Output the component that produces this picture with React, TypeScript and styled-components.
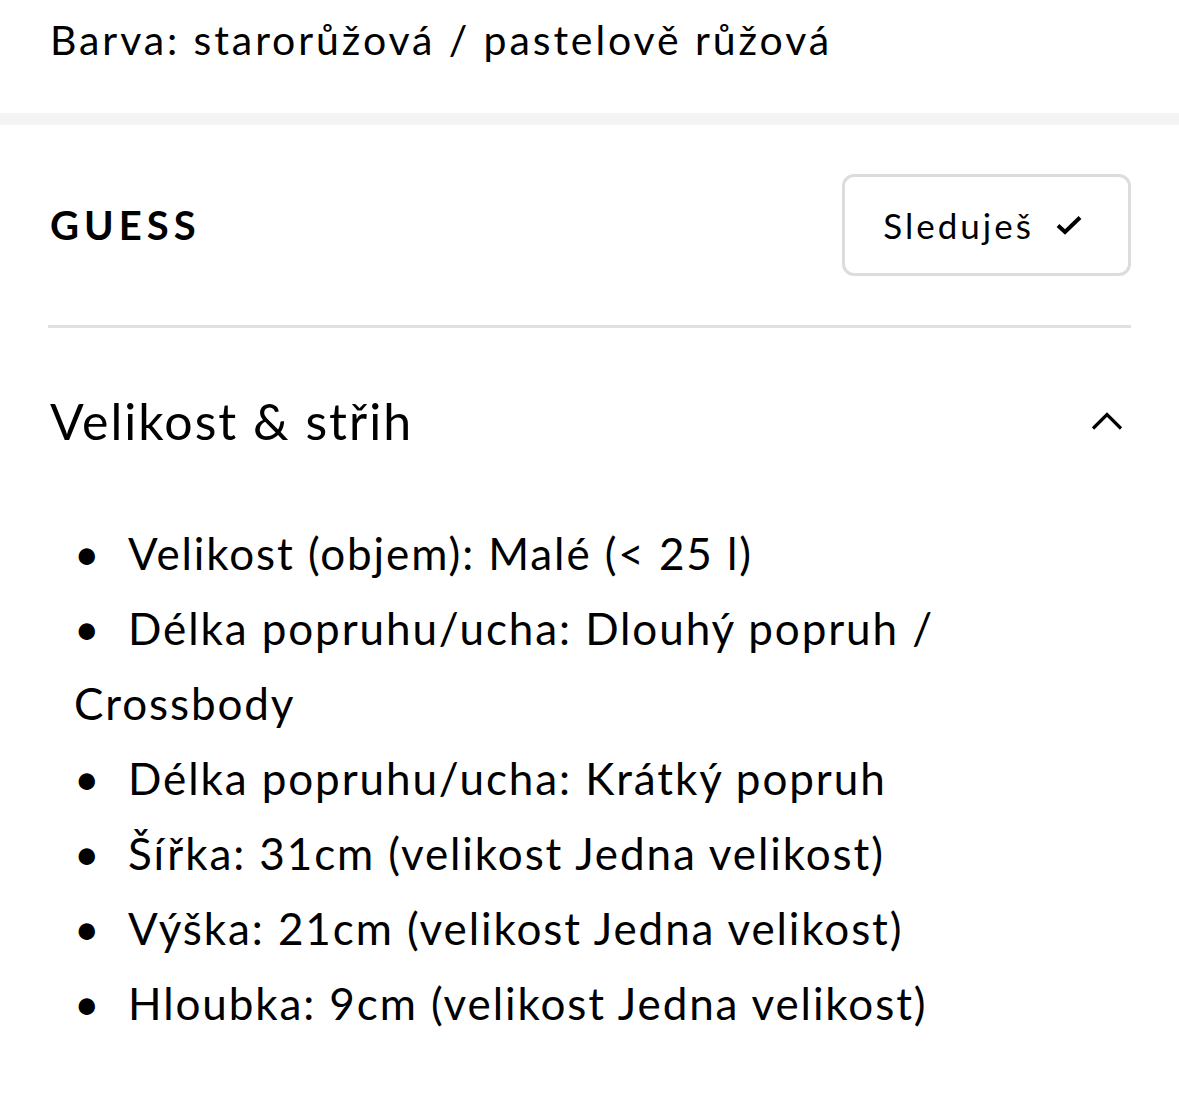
import React from "react";
import styled, { createGlobalStyle } from "styled-components";

const GlobalStyle = createGlobalStyle`
  html, body { margin: 0; padding: 0; background: #ffffff; }
  body { font-family: Lato, "Open Sans", sans-serif; color: #000; -webkit-font-smoothing: antialiased; }
`;

const Page = styled.div`
  width: 1179px;
  min-height: 1118px;
  background: #fff;
`;

const ColorSection = styled.div`
  height: 113px;
  padding: 0 50px;
  box-sizing: border-box;
  display: flex;
  align-items: flex-start;
`;

const ColorText = styled.p`
  margin: 0;
  padding-top: 12px;
  font-size: 41px;
  line-height: 56px;
  letter-spacing: 2.9px;
`;

const Band = styled.div`
  height: 12px;
  background: #f4f4f4;
`;

const Content = styled.div`
  padding: 0 48px;
`;

const BrandRow = styled.div`
  display: flex;
  align-items: center;
  justify-content: space-between;
  padding: 49px 0 49px 2px;
  border-bottom: 3px solid #e0e0e0;
`;

const Brand = styled.h2`
  margin: 0;
  font-size: 40px;
  font-weight: 700;
  letter-spacing: 5px;
`;

const FollowButton = styled.button`
  width: 289px;
  height: 102px;
  box-sizing: border-box;
  border: 3px solid #dcdcdc;
  border-radius: 12px;
  background: #fff;
  display: flex;
  align-items: center;
  justify-content: center;
  gap: 22px;
  padding: 0 8px 0 0;
  font-family: inherit;
  font-size: 35px;
  letter-spacing: 3px;
  color: #000;
`;

const SectionHeader = styled.div`
  display: flex;
  align-items: center;
  justify-content: space-between;
  padding: 58px 8px 0 2px;
  height: 70px;
`;

const SectionTitle = styled.h3`
  margin: 0;
  font-size: 50px;
  font-weight: 400;
  line-height: 70px;
  letter-spacing: 2px;
`;

const List = styled.ul`
  list-style: none;
  margin: 60px 0 0;
  padding: 0 0 0 26px;
`;

const Item = styled.li`
  font-size: 44px;
  line-height: 75px;
  letter-spacing: 1.9px;
  &::before {
    content: "•";
    display: inline-block;
    width: 54px;
    letter-spacing: 0;
  }
`;

const items = [
  "Velikost (objem): Malé (< 25 l)",
  "Délka popruhu/ucha: Dlouhý popruh / Crossbody",
  "Délka popruhu/ucha: Krátký popruh",
  "Šířka: 31cm (velikost Jedna velikost)",
  "Výška: 21cm (velikost Jedna velikost)",
  "Hloubka: 9cm (velikost Jedna velikost)",
];

export default function App() {
  return (
    <Page>
      <GlobalStyle />
      <ColorSection>
        <ColorText>Barva: starorůžová / pastelově růžová</ColorText>
      </ColorSection>
      <Band />
      <Content>
        <BrandRow>
          <Brand>GUESS</Brand>
          <FollowButton>
            Sleduješ
            <svg width="26" height="20" viewBox="0 0 26 20" fill="none">
              <path d="M2 10.5 L9 17 L24 2.5" stroke="#000" strokeWidth="4" />
            </svg>
          </FollowButton>
        </BrandRow>
        <SectionHeader>
          <SectionTitle>Velikost &amp; střih</SectionTitle>
          <svg width="32" height="18" viewBox="0 0 32 18" fill="none">
            <path d="M2 16.5 L16 2.5 L30 16.5" stroke="#000" strokeWidth="3.2" />
          </svg>
        </SectionHeader>
        <List>
          {items.map((t) => (
            <Item key={t}>{t}</Item>
          ))}
        </List>
      </Content>
    </Page>
  );
}
